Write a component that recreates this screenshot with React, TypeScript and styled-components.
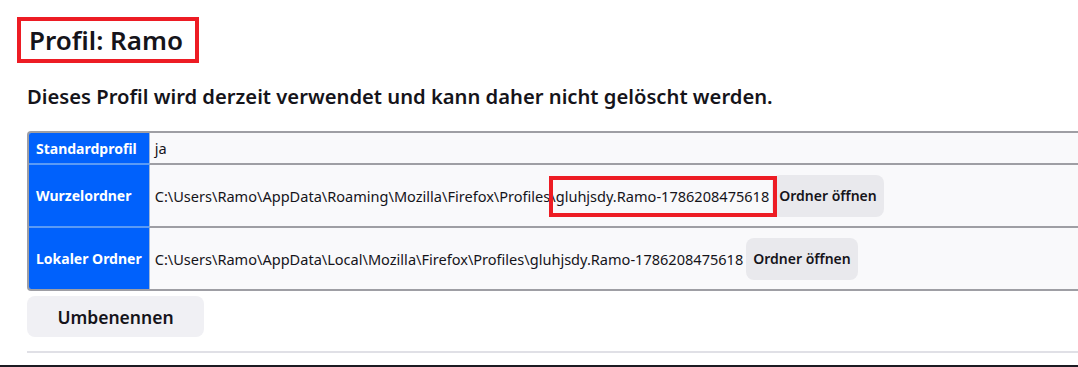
import React from 'react';
import styled, { createGlobalStyle } from 'styled-components';

const GlobalStyle = createGlobalStyle`
  html, body {
    margin: 0;
    padding: 0;
    background: #ffffff;
    overflow: hidden;
  }
  body {
    font-family: 'Noto Sans', 'Open Sans', sans-serif;
    color: #15141a;
  }
`;

const Page = styled.div`
  width: 1078px;
  height: 367px;
  box-sizing: border-box;
  padding: 17px 0 0 27px;
  border-bottom: 2px solid #1c1b22;
  overflow: hidden;
`;

// red annotation frame drawn over the text
const Marked = styled.span<{ $inset: string }>`
  position: relative;

  &::after {
    content: '';
    position: absolute;
    border: 4px solid #ed1c24;
    inset: ${(p) => p.$inset};
    pointer-events: none;
  }
`;

const Title = styled.h2`
  display: inline-block;
  margin: 0 0 0 -10px;
  padding: 4px 12px 4px 8px;
  border: 4px solid #ed1c24;
  font-size: 26px;
  font-weight: 600;
  line-height: 30px;
`;

const Notice = styled.h3`
  margin: 20px 0 0;
  font-size: 20.2px;
  font-weight: 600;
  line-height: 26px;
`;

const Table = styled.table`
  margin-top: 22px;
  width: 1100px;
  border-collapse: separate;
  border-spacing: 0;
  border: 2px solid #9e9ea4;
  border-right: none;
  border-radius: 4px 0 0 4px;
  overflow: hidden;
  font-size: 14.55px;
`;

const HeadCell = styled.th`
  width: 104px;
  padding: 0 7px;
  background: #0061fc;
  color: #ffffff;
  font-size: 14px;
  font-weight: 700;
  text-align: left;
  white-space: nowrap;
  border-right: 1px solid #9fb6d8;
  tr:not(:last-child) & {
    border-bottom: 2px solid #5a9af5;
  }
`;

const DataCell = styled.td<{ $tall?: boolean }>`
  height: ${(p) => (p.$tall ? '61px' : '30px')};
  padding: 0 5px;
  background: #f9f9fb;
  white-space: nowrap;
  tr:not(:last-child) & {
    border-bottom: 2px solid #9e9ea4;
  }
`;

const Path = styled.span`
  vertical-align: middle;
`;

const SmallButton = styled.button`
  margin-left: 3px;
  height: 42px;
  padding: 0 7px;
  border: none;
  border-radius: 8px;
  background: #e9e9ed;
  color: #15141a;
  font-family: inherit;
  font-size: 14px;
  font-weight: 600;
  vertical-align: middle;
`;

const BigButton = styled.button`
  margin-top: 5px;
  width: 177px;
  height: 41px;
  border: none;
  border-radius: 8px;
  background: #f0f0f4;
  color: #15141a;
  font-family: inherit;
  font-size: 17.5px;
  font-weight: 600;
`;

const Rule = styled.hr`
  margin: 14px 0 0;
  border: none;
  border-top: 2px solid #e0e0e6;
`;

export default function App() {
  return (
    <>
      <GlobalStyle />
      <Page>
        <Title>Profil: Ramo</Title>
        <Notice>Dieses Profil wird derzeit verwendet und kann daher nicht gelöscht werden.</Notice>
        <Table>
          <tbody>
            <tr>
              <HeadCell>Standardprofil</HeadCell>
              <DataCell>ja</DataCell>
            </tr>
            <tr>
              <HeadCell>Wurzelordner</HeadCell>
              <DataCell $tall>
                <Path>
                  C:\Users\Ramo\AppData\Roaming\Mozilla\Firefox\Profiles\
                  <Marked $inset="-10px -8px -11px -7px">gluhjsdy.Ramo-1786208475618</Marked>
                </Path>
                <SmallButton>Ordner öffnen</SmallButton>
              </DataCell>
            </tr>
            <tr>
              <HeadCell>Lokaler Ordner</HeadCell>
              <DataCell $tall>
                <Path>C:\Users\Ramo\AppData\Local\Mozilla\Firefox\Profiles\gluhjsdy.Ramo-1786208475618</Path>
                <SmallButton>Ordner öffnen</SmallButton>
              </DataCell>
            </tr>
          </tbody>
        </Table>
        <BigButton>Umbenennen</BigButton>
        <Rule />
      </Page>
    </>
  );
}
